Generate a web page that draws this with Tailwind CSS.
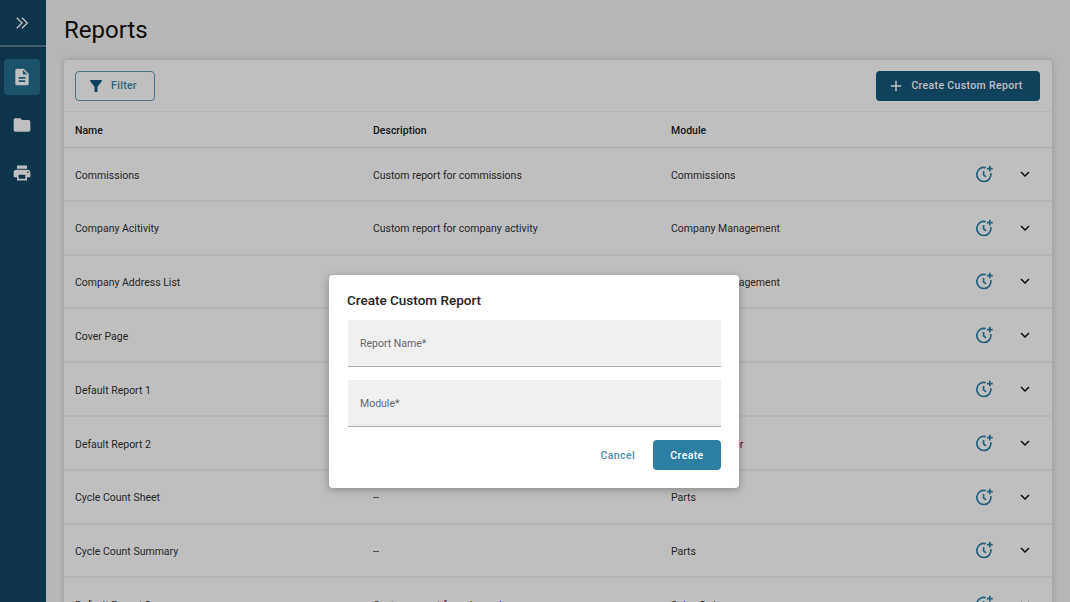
<!DOCTYPE html>
<html lang="en">
  <head>
    <meta charset="UTF-8" />
    <meta name="viewport" content="width=device-width, initial-scale=1.0" />
    <title>Reports</title>
    <script src="https://cdn.jsdelivr.net/npm/@tailwindcss/browser@4"></script>
  </head>
  <body class="relative h-[602px] w-[1070px] overflow-hidden bg-[#f4f4f4] font-['Roboto',sans-serif] text-[#333]">
    <div class="flex h-full">
      <!-- sidebar -->
      <aside class="flex w-[46px] shrink-0 flex-col items-center bg-[#134864]">
        <div class="flex h-[47px] w-full items-center justify-center border-b-2 border-white/30 pr-[2px] text-white">
          <svg class="h-[18px] w-[18px]" viewBox="0 0 24 24" fill="none" stroke="currentColor" stroke-width="1.8"><path d="M5 5l7 7-7 7M12 5l7 7-7 7" /></svg>
        </div>
        <div class="mr-[2px] mt-3 flex h-9 w-9 items-center justify-center rounded bg-[#246f8e] text-white">
          <svg class="h-5 w-5" viewBox="0 0 24 24" fill="currentColor"><path d="M14 2H6c-1.1 0-1.99.9-1.99 2L4 20c0 1.1.89 2 1.99 2H18c1.1 0 2-.9 2-2V8l-6-6zm2 16H8v-2h8v2zm0-4H8v-2h8v2zm-3-5V3.5L18.5 9H13z" /></svg>
        </div>
        <div class="mr-[2px] mt-3 flex h-9 w-9 items-center justify-center text-white">
          <svg class="h-5 w-5" viewBox="0 0 24 24" fill="currentColor"><path d="M10 4H4c-1.1 0-1.99.9-1.99 2L2 18c0 1.1.9 2 2 2h16c1.1 0 2-.9 2-2V8c0-1.1-.9-2-2-2h-8l-2-2z" /></svg>
        </div>
        <div class="mr-[2px] mt-3 flex h-9 w-9 items-center justify-center text-white">
          <svg class="h-5 w-5" viewBox="0 0 24 24" fill="currentColor"><path d="M19 8H5c-1.66 0-3 1.34-3 3v6h4v4h12v-4h4v-6c0-1.66-1.34-3-3-3zm-3 11H8v-5h8v5zm3-7c-.55 0-1-.45-1-1s.45-1 1-1 1 .45 1 1-.45 1-1 1zm-1-9H6v4h12V3z" /></svg>
        </div>
      </aside>

      <main class="min-w-0 flex-1 pl-[18px] pr-[18px]">
        <h1 class="flex h-[60px] items-center text-[24px] leading-none text-[#111]">Reports</h1>

        <div class="rounded-t bg-white shadow-[0_0_6px_rgba(0,0,0,0.2)]">
          <div class="flex h-[52px] items-center justify-between border-b border-black/5 pl-[11px] pr-[12px]">
            <button class="flex h-[30px] w-[80px] items-center justify-center gap-[6px] rounded border border-[#5f9ab5] pr-[6px] pt-[1px] text-[10.5px] font-medium tracking-[0.3px] text-[#3f87a6]">
              <svg class="h-[18px] w-[18px] text-[#14587c]" viewBox="0 0 24 24" fill="currentColor"><path d="M4.25 5.61C6.27 8.2 10 13 10 13v6c0 .55.45 1 1 1h2c.55 0 1-.45 1-1v-6s3.72-4.8 5.74-7.39c.51-.66.04-1.61-.79-1.61H5.04c-.83 0-1.3.95-.79 1.61z" /></svg>
              Filter
            </button>
            <button class="flex h-[30px] w-[164px] items-center justify-center gap-[6px] rounded bg-[#14587c] pr-[6px] pt-[1px] text-[10.5px] font-medium tracking-[0.35px] text-white">
              <svg class="h-[18px] w-[18px]" viewBox="0 0 24 24" fill="none" stroke="currentColor" stroke-width="2"><path d="M12 5v14M5 12h14" /></svg>
              Create Custom Report
            </button>
          </div>

          <div class="grid h-[36px] grid-cols-[298px_298px_1fr] items-center border-b border-black/10 pl-[11px] pt-[3px] text-[10.5px] font-medium text-[#222]">
            <div>Name</div>
            <div>Description</div>
            <div>Module</div>
          </div>

          <div id="rows"></div>
        </div>
      </main>
    </div>

    <!-- dim layer -->
    <div class="absolute inset-0 bg-black/25"></div>

    <!-- dialog -->
    <div class="absolute left-[329px] top-[275px] h-[213px] w-[410px] rounded bg-white pl-[19px] pr-[18px] shadow-[0_2px_8px_rgba(0,0,0,0.3)]">
      <h2 class="-ml-px flex h-[45px] items-start pt-[15px] text-[13.5px] font-medium leading-[20px] text-[#222]">Create Custom Report</h2>
      <div class="flex h-[47px] items-center border-b border-[#aaa] bg-[#f0f0f0] pl-3 pt-[2px] text-[10.5px] text-[#666]">Report Name*</div>
      <div class="mt-[13px] flex h-[47px] items-center border-b border-[#aaa] bg-[#f0f0f0] pl-3 pt-[1px] text-[10.5px] text-[#666]">Module*</div>
      <div class="mt-[13px] flex items-center justify-end gap-[18px]">
        <button class="pt-[1px] text-[10.5px] font-medium tracking-[0.4px] text-[#4a90ad]">Cancel</button>
        <button class="h-[30px] w-[68px] rounded bg-[#2c7fa3] pt-[1px] text-[10.5px] font-medium tracking-[0.4px] text-white">Create</button>
      </div>
    </div>

    <script>
      const reports = [
        ["Commissions", "Custom report for commissions", "Commissions"],
        ["Company Acitivity", "Custom report for company activity", "Company Management"],
        ["Company Address List", "", "Company Management"],
        ["Cover Page", "", ""],
        ["Default Report 1", "", ""],
        ["Default Report 2", "", "Purchase Order"],
        ["Cycle Count Sheet", "--", "Parts"],
        ["Cycle Count Summary", "--", "Parts"],
        ["Default Report 3", "Custom report for sales order", "Sales Order"],
      ];

      document.getElementById("rows").innerHTML = reports
        .map(
          (r) => `
          <div class="grid h-[53.8px] grid-cols-[298px_298px_1fr_24px_18px_24px_12px] items-center border-b-2 border-black/5 pl-[11px] text-[10.5px] text-[#333]">
            <div class="pt-[3px]">${r[0]}</div>
            <div class="pt-[3px]">${r[1]}</div>
            <div class="pt-[3px]">${r[2]}</div>
            <svg class="h-[20px] w-[20px] text-[#2c7fa3]" viewBox="0 0 24 24" fill="none" stroke="currentColor" stroke-width="2"><path d="M14 4.3A8.5 8.5 0 1 0 20.2 11" /><path d="M11.5 8.5v4.5l3 2.5" /><path d="M19 2v7M15.5 5.5h7" /></svg>
            <div></div>
            <svg class="h-[18px] w-[18px] text-[#111]" viewBox="0 0 24 24" fill="currentColor"><path d="M16.59 8.59L12 13.17 7.41 8.59 6 10l6 6 6-6z" /></svg>
            <div></div>
          </div>`
        )
        .join("");
    </script>
  </body>
</html>
